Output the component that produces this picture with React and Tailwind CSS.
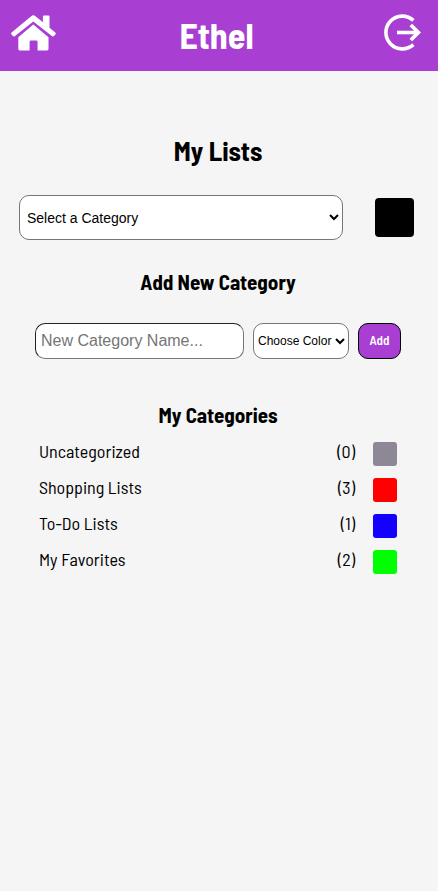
const categories = [
  { name: 'Uncategorized', count: 0, swatch: 'bg-[#8e8896]' },
  { name: 'Shopping Lists', count: 3, swatch: 'bg-[#ff0000]' },
  { name: 'To-Do Lists', count: 1, swatch: 'bg-[#1400ff]' },
  { name: 'My Favorites', count: 2, swatch: 'bg-[#00ff00]' },
];

function HomeIcon() {
  return (
    <svg viewBox="0 0 45 36" className="h-9 w-[45px]" aria-hidden="true">
      <path
        fill="#fff"
        d="M22.3 9.4 37.5 22.2V34q0 1.4-1.4 1.4H26.6V27q0-1.4-1.4-1.4h-5.2q-1.4 0-1.4 1.4v8.4H8.7q-1.4 0-1.4-1.4V22.2Z"
      />
      <path
        fill="#fff"
        d="M20.2 1.2q2.1-1.7 4.3 0l7.4 6.1V1.6q0-1.1 1.1-1.1h4.4q1.1 0 1.1 1.1v11.2l5.8 4.8q.9.8.2 1.7l-1.5 1.8q-.8.9-1.8.1L22.3 6.4 3.7 21.2q-1 .8-1.8-.1L.4 19.3q-.7-.9.2-1.7Z"
      />
    </svg>
  );
}

function LogoutIcon() {
  return (
    <svg viewBox="0 0 38 38" className="size-[38px]" fill="none" stroke="#fff" aria-hidden="true">
      <path d="M29.4 6.4A16.4 16.4 0 1 0 29.4 30.6" strokeWidth="3.6" />
      <path d="M13 18.5H34" strokeWidth="3.6" />
      <path d="M26.8 11 34.3 18.5 26.8 26" strokeWidth="3.8" />
    </svg>
  );
}

export default function App() {
  return (
    <div className="min-h-screen bg-[#f5f5f5] font-['Barlow_Semi_Condensed',Roboto,sans-serif] text-black">
      <header className="grid h-[71px] grid-cols-[1fr_auto_1fr] items-center bg-[#a83ed2] pr-4 pb-1.5 pl-[11px]">
        <a href="#home" aria-label="Home" className="justify-self-start">
          <HomeIcon />
        </a>
        <h1 className="pt-1 text-4xl font-bold text-white">Ethel</h1>
        <button type="button" aria-label="Log out" className="justify-self-end">
          <LogoutIcon />
        </button>
      </header>

      <main>
        <h2 className="pt-[63px] pr-0.5 text-center text-[27px] leading-8 font-bold">My Lists</h2>

        <div className="mt-[29px] flex items-center gap-8 pr-6 pl-[19px]">
          <select
            aria-label="Category"
            className="h-[45px] min-w-0 flex-1 rounded-[10px] border border-[#767676] bg-white px-[3px] font-['Liberation_Sans',Arial,sans-serif] text-sm"
          >
            <option>Select a Category</option>
            {categories.map((category) => (
              <option key={category.name}>{category.name}</option>
            ))}
          </select>
          <span className="size-[39px] rounded bg-black" />
        </div>

        <h3 className="mt-7 pr-0.5 text-center text-[21px] leading-7 font-bold">Add New Category</h3>

        <form className="mt-[27px] flex gap-[9px] pr-[37px] pl-[35px]">
          <input
            type="text"
            aria-label="New category name"
            placeholder="New Category Name..."
            className="h-9 min-w-0 flex-1 rounded-[10px] border border-t-[#222] border-r-[#767676] border-b-[#767676] border-l-[#222] bg-white px-[5px] font-['Liberation_Sans',Arial,sans-serif] text-base placeholder:text-[#757575]"
          />
          <select
            aria-label="Color"
            className="h-9 w-24 rounded-[10px] border border-[#767676] bg-white font-['Liberation_Sans',Arial,sans-serif] text-xs"
          >
            <option>Choose Color</option>
            <option>Red</option>
            <option>Blue</option>
            <option>Green</option>
          </select>
          <button
            type="button"
            className="h-9 w-[43px] rounded-[10px] border border-black bg-[#a83ed2] text-[13px] font-semibold text-white"
          >
            Add
          </button>
        </form>

        <h3 className="mt-[42px] pr-0.5 text-center text-[21px] leading-7 font-bold">My Categories</h3>

        <ul className="mt-[7px] pr-[41px] pl-[39px]">
          {categories.map((category) => (
            <li key={category.name} className="flex h-9 items-center text-lg">
              <span className="flex-1 pb-1.5">{category.name}</span>
              <span className="mr-[18px] pb-1.5">({category.count})</span>
              <span className={`size-6 rounded-[3px] ${category.swatch}`} />
            </li>
          ))}
        </ul>
      </main>
    </div>
  );
}
